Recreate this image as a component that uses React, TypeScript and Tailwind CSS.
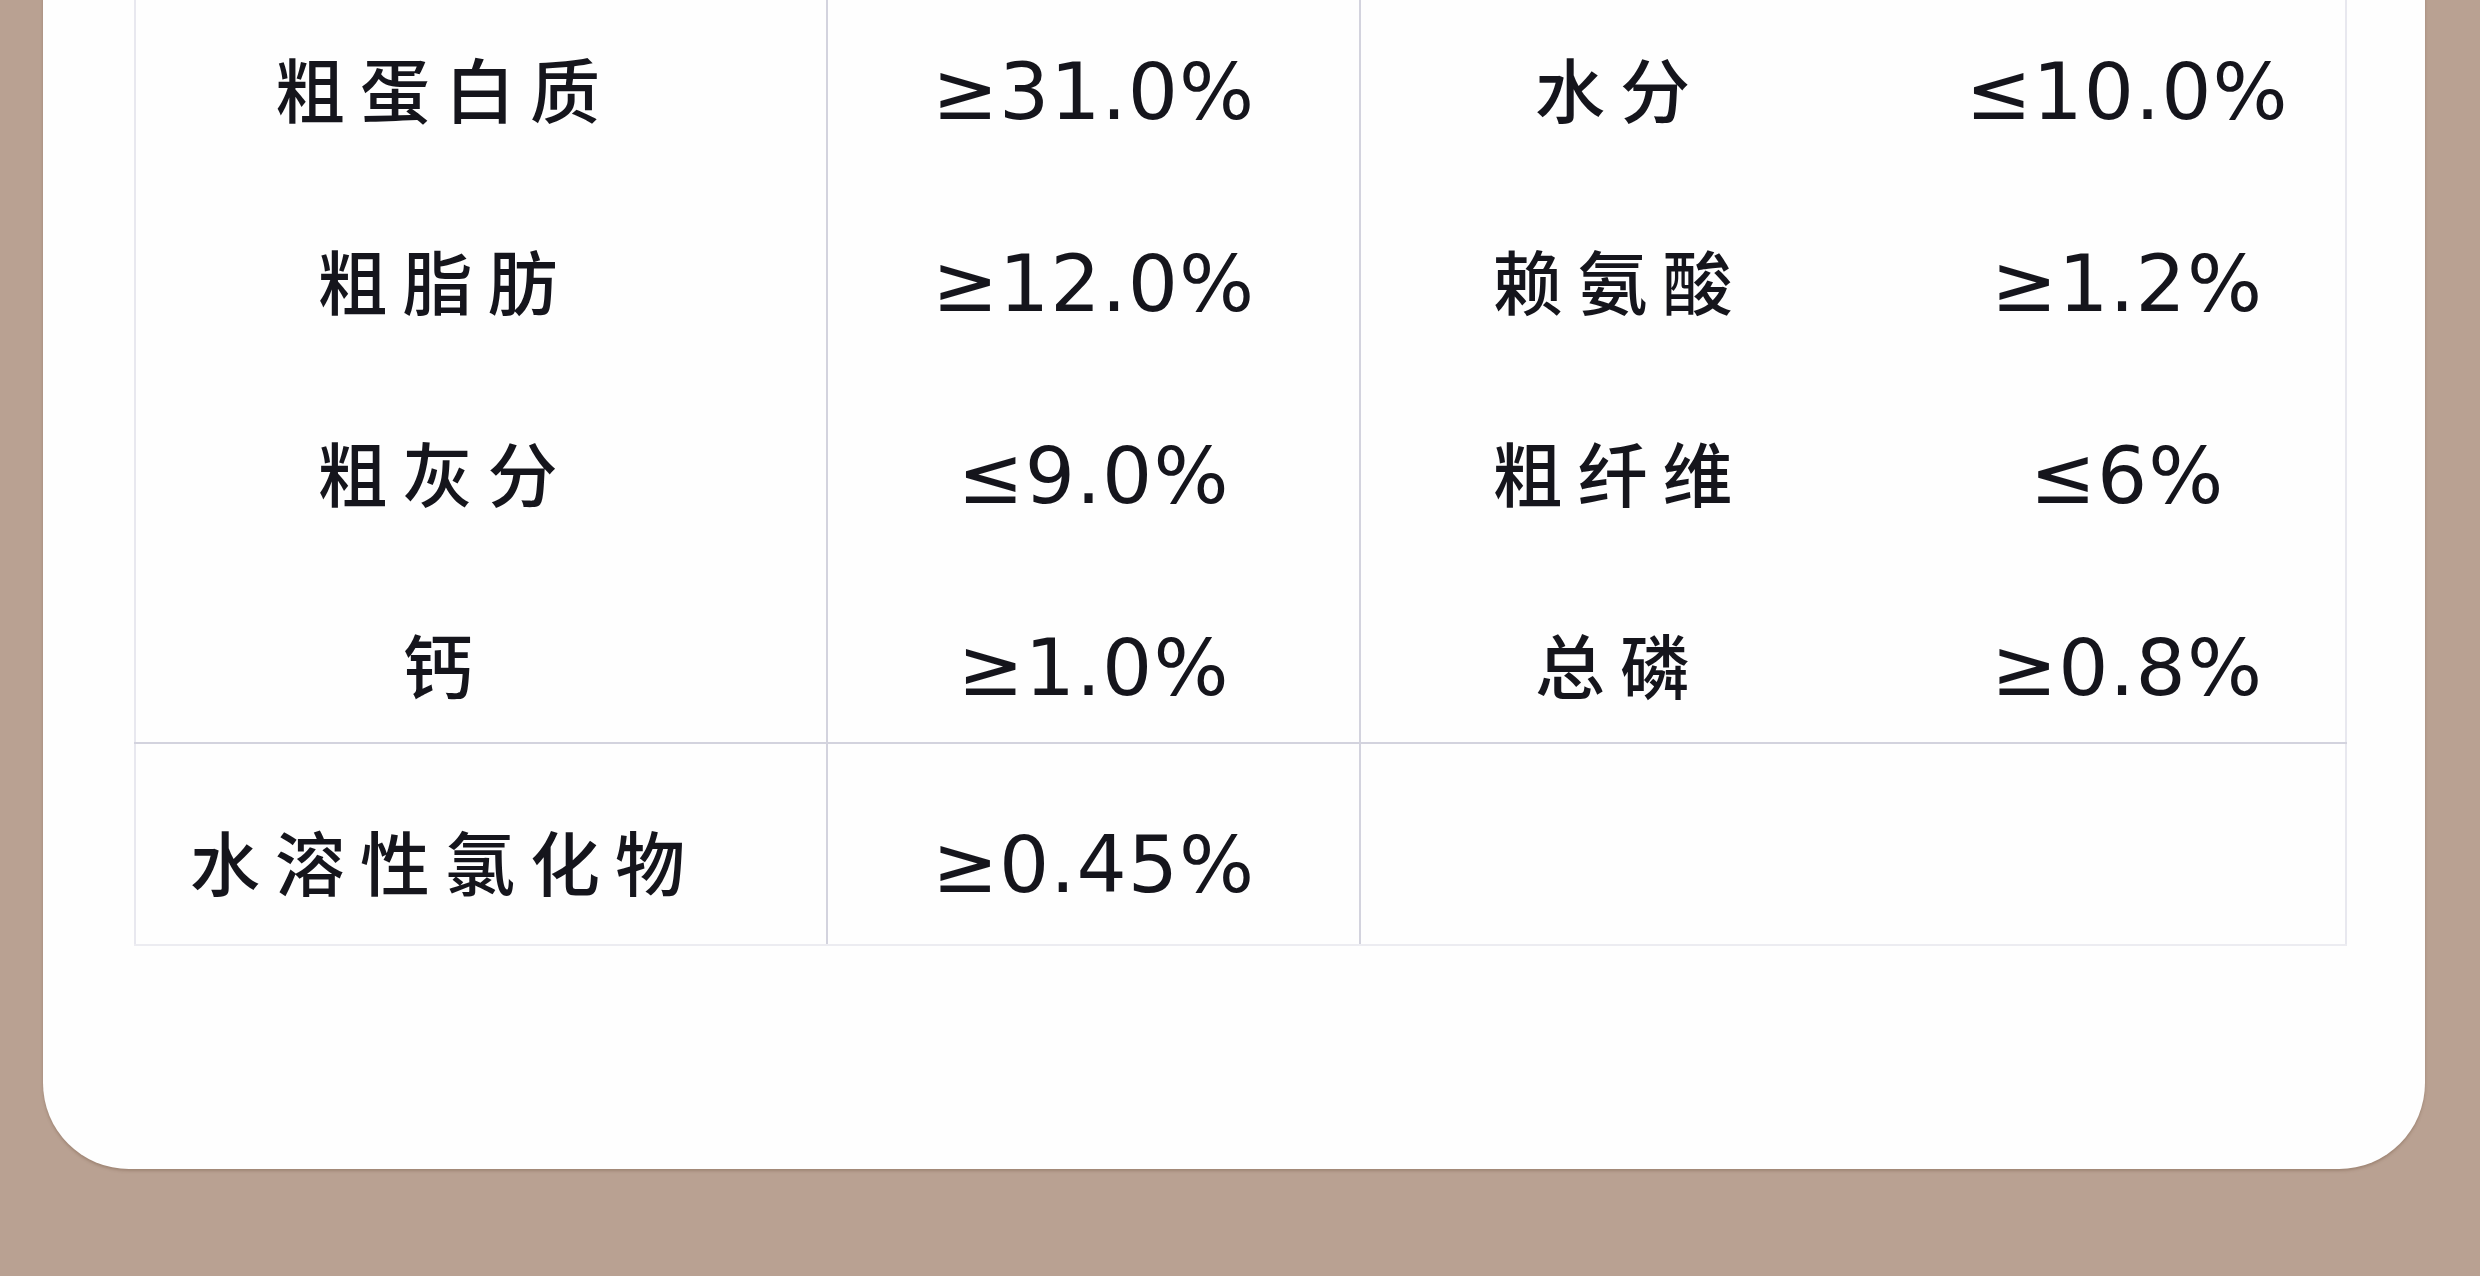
const cjk = "font-['Noto_Sans_CJK_SC',sans-serif]";
const num = "font-['DejaVu_Sans','Noto_Sans_CJK_SC',sans-serif]";

type Row = { label: string; value: string };

const leftRows: Row[] = [
  { label: '粗蛋白质', value: '≥31.0%' },
  { label: '粗脂肪', value: '≥12.0%' },
  { label: '粗灰分', value: '≤9.0%' },
  { label: '钙', value: '≥1.0%' },
];

const rightRows: Row[] = [
  { label: '水分', value: '≤10.0%' },
  { label: '赖氨酸', value: '≥1.2%' },
  { label: '粗纤维', value: '≤6%' },
  { label: '总磷', value: '≥0.8%' },
];

// last row is shorter, text sits lower in it
const rowClass = ['h-[192px]', 'h-[192px]', 'h-[192px]', 'h-[174px] pt-[18px]'];

function Label({ text }: { text: string }) {
  return (
    <span className={`${cjk} text-[70px] font-medium leading-none tracking-[15px] text-[#15151c]`}>{text}</span>
  );
}

function Value({ text }: { text: string }) {
  return <span className={`${num} mt-[8px] text-[79px] leading-none tracking-[1px] text-[#15151c]`}>{text}</span>;
}

export default function App() {
  return (
    <div className="h-[1276px] w-[2480px] overflow-hidden bg-[#b9a192]">
      <div className="ml-[43px] w-[2382px] rounded-b-[86px] bg-[#fefefe] pb-[223px] pl-[91px] shadow-[0_2px_3px_rgba(110,80,60,0.35)]">
        <div className="-mt-2 w-[2213px]">
          {/* four upper rows */}
          <div className="flex border-b-2 border-[#d3d3de]">
            <div className="flex w-[694px] flex-col border-x-2 border-l-[#e8e8ef] border-r-[#d3d3de] pr-[72px]">
              {leftRows.map((r, i) => (
                <div key={r.label} className={`flex items-center justify-center ${rowClass[i]}`}>
                  <Label text={r.label} />
                </div>
              ))}
            </div>
            <div className="flex w-[533px] flex-col border-r-2 border-[#d3d3de]">
              {leftRows.map((r, i) => (
                <div key={r.value} className={`flex items-center justify-center ${rowClass[i]}`}>
                  <Value text={r.value} />
                </div>
              ))}
            </div>
            <div className="flex w-[503px] flex-col pl-[15px]">
              {rightRows.map((r, i) => (
                <div key={r.label} className={`flex items-center justify-center ${rowClass[i]}`}>
                  <Label text={r.label} />
                </div>
              ))}
            </div>
            <div className="flex flex-1 flex-col border-r-2 border-[#e8e8ef] pl-[45px]">
              {rightRows.map((r, i) => (
                <div key={r.value} className={`flex items-center justify-center ${rowClass[i]}`}>
                  <Value text={r.value} />
                </div>
              ))}
            </div>
          </div>

          {/* bottom row */}
          <div className="flex h-[202px] border-b-2 border-[#ececf1]">
            <div className="flex w-[694px] items-center justify-center border-x-2 border-l-[#e8e8ef] border-r-[#d3d3de] pr-[72px] pt-[34px]">
              <Label text="水溶性氯化物" />
            </div>
            <div className="flex w-[533px] items-center justify-center border-r-2 border-[#d3d3de] pt-[34px]">
              <Value text="≥0.45%" />
            </div>
            <div className="flex-1 border-r-2 border-[#e8e8ef]" />
          </div>
        </div>
      </div>
    </div>
  );
}
